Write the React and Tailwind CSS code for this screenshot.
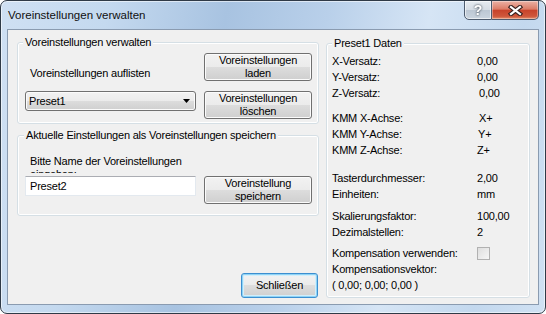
const btn =
  "flex flex-col items-center justify-center text-center border border-[#707070] rounded-[3px] bg-[linear-gradient(#f2f2f2,#ebebeb_50%,#dddddd_50%,#cfcfcf)] shadow-[inset_0_0_0_1px_#fbfbfb] leading-[13px]";

function GroupBox({ title, legendLeft, className, children }) {
  return (
    <div
      className={`relative border border-[#d5dfe5] rounded-[3px] shadow-[inset_0_0_0_1px_#ffffff] ${className}`}
    >
      <span
        className={`absolute -top-[7px] ${legendLeft} px-[2px] bg-[#f0f0f0] leading-[13px] whitespace-nowrap`}
      >
        {title}
      </span>
      {children}
    </div>
  );
}

function Row({ label, value, className = "", valueClass = "" }) {
  return (
    <div className={`grid grid-cols-[145px_1fr] h-[16px] items-center leading-[16px] ${className}`}>
      <span className="whitespace-nowrap">{label}</span>
      <span className={valueClass}>{value}</span>
    </div>
  );
}

export default function App() {
  return (
    <div className="w-[546px] h-[314px] bg-white font-['Liberation_Sans',Arial,sans-serif] text-[11px] text-black">
      <div className="w-full h-full flex flex-col rounded-[7px] border border-[#2f3a47] bg-[linear-gradient(100deg,#cfe0f3_0%,#c4d9ef_18%,#a8c3e1_38%,#b9d0ea_55%,#d6e5f5_72%,#c3d8ee_88%,#d0e1f3_100%)] shadow-[inset_0_0_0_1px_rgba(255,255,255,0.55)] overflow-hidden">
        {/* title bar */}
        <div className="h-[28px] flex items-start justify-between shrink-0">
          <span className="pl-[7px] pt-[7px] text-[11.5px] leading-[15px] text-[#101010]">
            Voreinstellungen verwalten
          </span>
          <div className="flex mr-[6px] -mt-px">
            <div className="w-[28px] h-[20px] flex items-center justify-center border border-[#4d5b6e] rounded-bl-[5px] bg-[linear-gradient(#e6ebf0,#d5dce4_50%,#bcc7d3_50%,#cad4df)] shadow-[inset_0_0_0_1px_rgba(255,255,255,0.6)]">
              <span className="text-[14px] leading-[14px] font-bold text-white drop-shadow-[0_0_1px_#27313d]">
                ?
              </span>
            </div>
            <div className="w-[47px] h-[20px] flex items-center justify-center border border-l-0 border-[#4d5b6e] rounded-br-[5px] bg-[linear-gradient(#ebb2a5,#dc7c67_45%,#c8432b_52%,#cf573b_85%,#e4906c)] shadow-[inset_0_0_0_1px_rgba(255,255,255,0.35)]">
              <svg width="15" height="11" viewBox="0 0 15 11">
                <path d="M3 2 L12 9 M12 2 L3 9" stroke="#3a2220" strokeWidth="4.4" strokeLinecap="square" />
                <path d="M3 2 L12 9 M12 2 L3 9" stroke="#ffffff" strokeWidth="2.2" strokeLinecap="square" />
              </svg>
            </div>
          </div>
        </div>

        {/* client area */}
        <div className="flex-1 mx-[6px] mb-[8px] border border-[#8a9bb0] bg-[#f0f0f0] flex pl-[9px] pr-[8px] pt-[12px] pb-[6px] gap-[7px] tracking-[-0.2px]">
          <div className="w-[302px] flex flex-col">
            <GroupBox title="Voreinstellungen verwalten" legendLeft="left-[5px]" className="h-[82px]">
              <div className="grid grid-cols-[171px_108px] grid-rows-[28px_28px] gap-x-[8px] gap-y-[10px] pl-[7px] pt-[10px]">
                <span className="self-end mb-[1px] ml-[5px] leading-[13px] whitespace-nowrap">
                  Voreinstellungen auflisten
                </span>
                <button className={`${btn} h-[28px]`}>
                  <span>Voreinstellungen</span>
                  <span>laden</span>
                </button>
                <div className="self-start h-[20px] flex items-center justify-between pl-[3px] pr-[5px] border border-[#707070] rounded-[3px] bg-[linear-gradient(#f2f2f2,#ebebeb_50%,#dddddd_50%,#cfcfcf)] shadow-[inset_0_0_0_1px_#fbfbfb]">
                  <span>Preset1</span>
                  <svg width="7" height="4" viewBox="0 0 7 4">
                    <path d="M0 0 H7 L3.5 4 Z" fill="#000" />
                  </svg>
                </div>
                <button className={`${btn} h-[28px]`}>
                  <span>Voreinstellungen</span>
                  <span>löschen</span>
                </button>
              </div>
            </GroupBox>

            <GroupBox
              title="Aktuelle Einstellungen als Voreinstellungen speichern"
              legendLeft="left-[6px]"
              className="h-[81px] mt-[11px]"
            >
              <div className="pl-[7px] pr-[6px] pt-[19px]">
                <div className="ml-[5px] w-[175px] h-[18px] overflow-hidden leading-[13px]">
                  Bitte Name der Voreinstellungen eingeben:
                </div>
                <div className="flex justify-between mt-[3px]">
                  <div className="w-[171px] h-[20px] flex items-center pl-[4px] bg-white border border-[#e3e9ef] border-t-[#abadb3]">
                    Preset2
                  </div>
                  <button className={`${btn} w-[108px] h-[28px]`}>
                    <span>Voreinstellung</span>
                    <span>speichern</span>
                  </button>
                </div>
              </div>
            </GroupBox>

            <button className="mt-auto self-end mr-px w-[77px] h-[25px] flex items-center justify-center border border-[#3c8fd0] rounded-[3px] bg-[linear-gradient(#f2f2f2,#ebebeb_50%,#dddddd_50%,#cfcfcf)] shadow-[inset_0_0_0_1px_#8fd3f5,inset_0_0_0_2px_#d2eefb] leading-[13px]">
              Schließen
            </button>
          </div>

          <GroupBox title="Preset1 Daten" legendLeft="left-[5px]" className="w-[204px] h-[255px] mt-[1px]">
            <div className="pl-[5px]">
              <Row label="X-Versatz:" value="0,00" className="mt-[9px]" />
              <Row label="Y-Versatz:" value="0,00" />
              <Row label="Z-Versatz:" value="0,00" valueClass="pl-[2px]" />
              <Row label="KMM X-Achse:" value="X+" className="mt-[9px]" valueClass="pl-[2px]" />
              <Row label="KMM Y-Achse:" value="Y+" valueClass="pl-[1px]" />
              <Row label="KMM Z-Achse:" value="Z+" />
              <Row label="Tasterdurchmesser:" value="2,00" className="mt-[12px]" />
              <Row label="Einheiten:" value="mm" />
              <Row label="Skalierungsfaktor:" value="100,00" className="mt-[6px]" />
              <Row label="Dezimalstellen:" value="2" />
              <Row
                label="Kompensation verwenden:"
                value={
                  <span className="block w-[13px] h-[13px] border border-[#b1b1b1] bg-[linear-gradient(135deg,#dedede,#f6f6f6)]" />
                }
                className="mt-[5px]"
              />
              <Row label="Kompensationsvektor:" value="" />
              <Row label="( 0,00; 0,00; 0,00 )" value="" />
            </div>
          </GroupBox>
        </div>
      </div>
    </div>
  );
}
